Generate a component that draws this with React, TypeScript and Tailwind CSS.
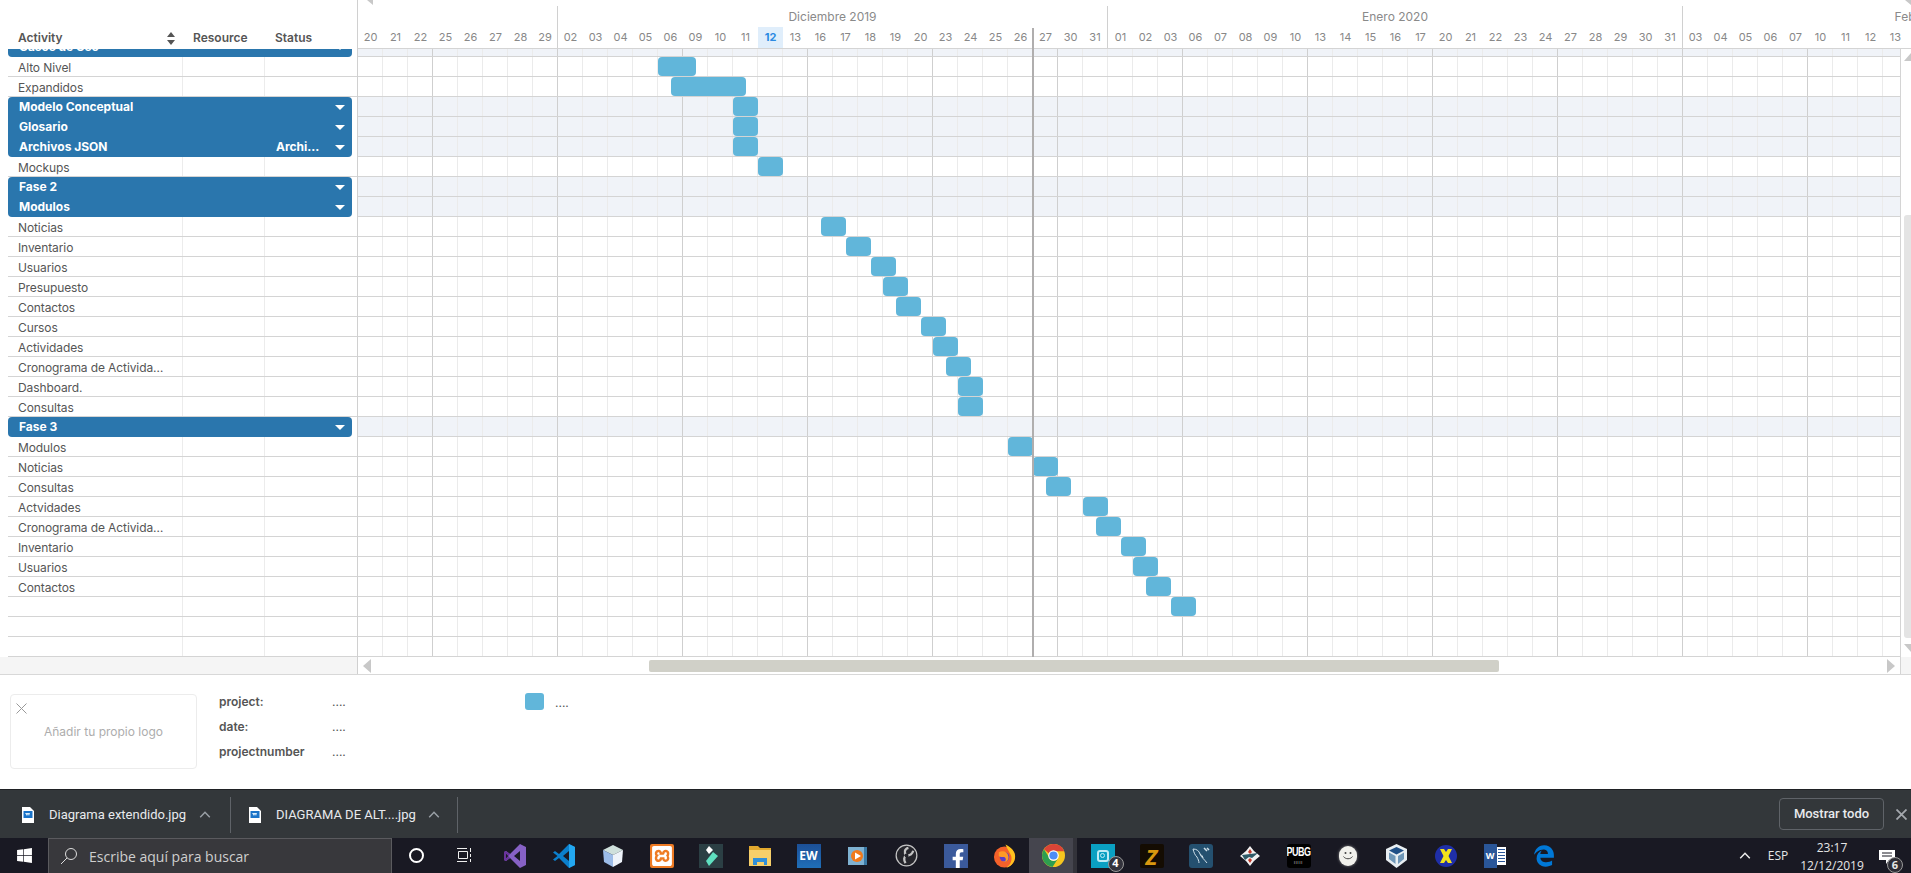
import type { ReactNode } from "react";
import { FaEdgeLegacy, FaFacebookF, FaWindows } from "react-icons/fa";
import { SiXampp } from "react-icons/si";

const dayLabels = "20 21 22 25 26 27 28 29 02 03 04 05 06 09 10 11 12 13 16 17 18 19 20 23 24 25 26 27 30 31 01 02 03 06 07 08 09 10 13 14 15 16 17 20 21 22 23 24 27 28 29 30 31 03 04 05 06 07 10 11 12 13".split(" ");
const monthEnds = [7, 29, 52];
const todayIndex = 16;
const columns = dayLabels.map((_, i) => i);

type Row = {
  name?: string;
  group?: boolean;
  top?: boolean;
  bottom?: boolean;
  status?: string;
  start?: number;
  span?: number;
};

const rows: Row[] = [
  { name: "Casos de Uso", group: true, bottom: true },
  { name: "Alto Nivel", start: 12, span: 1.5 },
  { name: "Expandidos", start: 12.5, span: 3 },
  { name: "Modelo Conceptual", group: true, top: true, start: 15, span: 1 },
  { name: "Glosario", group: true, start: 15, span: 1 },
  { name: "Archivos JSON", group: true, bottom: true, status: "Archivos", start: 15, span: 1 },
  { name: "Mockups", start: 16, span: 1 },
  { name: "Fase 2", group: true, top: true },
  { name: "Modulos", group: true, bottom: true },
  { name: "Noticias", start: 18.5, span: 1 },
  { name: "Inventario", start: 19.5, span: 1 },
  { name: "Usuarios", start: 20.5, span: 1 },
  { name: "Presupuesto", start: 21, span: 1 },
  { name: "Contactos", start: 21.5, span: 1 },
  { name: "Cursos", start: 22.5, span: 1 },
  { name: "Actividades", start: 23, span: 1 },
  { name: "Cronograma de Actividades", start: 23.5, span: 1 },
  { name: "Dashboard.", start: 24, span: 1 },
  { name: "Consultas", start: 24, span: 1 },
  { name: "Fase 3", group: true, top: true, bottom: true },
  { name: "Modulos", start: 26, span: 1 },
  { name: "Noticias", start: 27, span: 1 },
  { name: "Consultas", start: 27.5, span: 1 },
  { name: "Actvidades", start: 29, span: 1 },
  { name: "Cronograma de Actividades", start: 29.5, span: 1 },
  { name: "Inventario", start: 30.5, span: 1 },
  { name: "Usuarios", start: 31, span: 1 },
  { name: "Contactos", start: 31.5, span: 1 },
  { start: 32.5, span: 1 },
  {},
  {},
];

function Caret() {
  return <div className="w-0 h-0 border-l-[5px] border-r-[5px] border-t-[5px] border-l-transparent border-r-transparent border-t-white" />;
}

function LeftCells({ row }: { row: Row }) {
  if (row.group) {
    return (
      <div className="w-[358px] shrink-0 pl-2 pr-[5px] border-r border-[#d0d0d0]">
        <div
          className={`h-5 bg-[#2a76ad] flex items-center text-white font-bold ${row.top ? "rounded-t-[4px]" : ""} ${row.bottom ? "rounded-b-[4px]" : ""}`}
        >
          <span className="w-[268px] pl-[11px] leading-[22px]">{row.name}</span>
          <span className="w-[46px] truncate leading-[22px]">{row.status}</span>
          <span className="ml-[13px]">
            <Caret />
          </span>
        </div>
      </div>
    );
  }
  return (
    <div className="w-[358px] shrink-0 pl-2 border-r border-[#d0d0d0]">
      <div className="h-5 flex border-b border-[#d4d4d4] text-[#555]">
        <div className="w-[175px] pl-[10px] pr-[12px] border-r border-[#ececec] truncate leading-[21px] tracking-[-0.1px]">{row.name}</div>
        <div className="w-[82px] border-r border-[#ececec]" />
      </div>
    </div>
  );
}

function GanttRow({ row }: { row: Row }) {
  return (
    <div className="flex h-5 w-[1900px]">
      <LeftCells row={row} />
      <div className={`relative flex w-[1542px] border-b border-[#d4d4d4] overflow-hidden ${row.group ? "bg-[#f0f3f8]" : "bg-white"}`}>
        {columns.map((c) => (
          <div key={c} className={`w-[25px] shrink-0 border-r ${c % 5 === 2 ? "border-[#cfcfcf]" : "border-[#ebebeb]"}`} />
        ))}
        {row.start !== undefined && (
          <div
            className="absolute top-0 h-[19px] rounded-[4px] bg-[#61b6da]"
            style={{ left: row.start * 25, width: (row.span ?? 1) * 25 }}
          />
        )}
      </div>
    </div>
  );
}

function TimelineHeader() {
  return (
    <div className="w-[1553px] shrink-0 h-[49px] border-b border-[#d4d4d4] overflow-hidden">
      <div className="flex h-[27px] pt-[6px]">
        <div className="w-[200px] shrink-0 border-r border-[#d0d0d0]" />
        <div className="w-[550px] shrink-0 border-r border-[#d0d0d0] text-center text-[#8a8a8a] leading-[22px]">Diciembre 2019</div>
        <div className="w-[575px] shrink-0 border-r border-[#d0d0d0] text-center text-[#8a8a8a] leading-[22px]">Enero 2020</div>
        <div className="w-[500px] shrink-0 text-center text-[#8a8a8a] leading-[22px]">Febrero 2020</div>
      </div>
      <div className="flex h-[21px] w-[1600px]">
        {dayLabels.map((label, i) => (
          <div
            key={i}
            className={`w-[25px] shrink-0 flex items-center justify-center text-[11px] ${i === todayIndex ? "bg-[#e0eefb] text-[#2b8ae2] font-bold" : "text-[#888]"} ${monthEnds.includes(i) ? "border-r border-[#d0d0d0]" : ""}`}
          >
            {label}
          </div>
        ))}
      </div>
    </div>
  );
}

function Gantt() {
  return (
    <div className="relative font-['Inter',sans-serif] text-[12px]">
      <div className="flex h-[49px]">
        <div className="w-[358px] shrink-0 border-r border-[#d0d0d0] pt-[28px] pl-[18px] flex text-[#555] font-semibold leading-[20px]">
          <span className="w-[149px]">Activity</span>
          <svg width="8" height="13" viewBox="0 0 8 13" className="mt-[4px] fill-[#555]">
            <path d="M4 0 8 5H0ZM4 13 0 8H8Z" />
          </svg>
          <span className="ml-[18px] w-[82px]">Resource</span>
          <span>Status</span>
        </div>
        <TimelineHeader />
      </div>
      <div className="absolute left-[367px] top-0 w-0 h-0 border-t-[5px] border-l-[6px] border-t-[#c8c8c8] border-l-transparent" />
      <div className="absolute left-[1905px] top-0 w-0 h-0 border-t-[5px] border-l-[6px] border-t-[#c8c8c8] border-l-transparent" />
      <div className="flex h-[608px]">
        <div className="w-[1901px] h-[608px] overflow-hidden border-r border-[#d4d4d4]">
          <div className="-mt-[12px]">
            {rows.map((row, i) => (
              <GanttRow key={i} row={row} />
            ))}
          </div>
        </div>
        <div className="w-[10px] pt-[4px] flex flex-col items-end">
          <div className="w-0 h-0 border-b-[8px] border-l-[7px] border-b-[#c8c8c8] border-l-transparent" />
          <div className="w-[7px] h-[423px] mt-[154px] bg-[#e4e4e4] rounded-tl-[3px] rounded-bl-[3px]" />
          <div className="w-0 h-0 mt-[6px] border-t-[8px] border-l-[7px] border-t-[#c8c8c8] border-l-transparent" />
        </div>
      </div>
      <div className="flex h-[18px] border-b border-[#d8d8d8]">
        <div className="w-[358px] shrink-0 bg-[#f5f5f5] border-r border-[#d0d0d0]" />
        <div className="w-[1543px] flex items-center border-r border-[#d4d4d4]">
          <div className="ml-[5px] w-0 h-0 border-y-[7px] border-r-[8px] border-y-transparent border-r-[#c8c8c8]" />
          <div className="ml-[278px] w-[850px] h-3 bg-[#d0d0c8] rounded-[2px]" />
          <div className="ml-[388px] w-0 h-0 border-y-[7px] border-l-[8px] border-y-transparent border-l-[#c8c8c8]" />
        </div>
        <div className="flex-1 bg-[#f5f5f5]" />
      </div>
    </div>
  );
}

function Legend() {
  return (
    <div className="h-[114px] pt-[14px] pl-[10px] flex items-start bg-white font-['Inter',sans-serif] text-[12px]">
      <div className="relative w-[187px] h-[75px] mt-[5px] pt-px border border-[#ececec] rounded-[4px] flex items-center justify-center text-[#adadad]">
        <svg width="11" height="11" viewBox="0 0 11 11" className="absolute left-[5px] top-[8px] stroke-[#999]">
          <path d="M.5.5l10 10M10.5.5l-10 10" fill="none" />
        </svg>
        Añadir tu propio logo
      </div>
      <div className="ml-[22px] w-[306px] text-[#555]">
        {["project:", "date:", "projectnumber"].map((label) => (
          <div key={label} className="flex h-[25px] items-center">
            <span className="w-[113px] font-semibold">{label}</span>
            <span>....</span>
          </div>
        ))}
      </div>
      <div className="w-[19px] h-[17px] mt-[4px] rounded-[3px] bg-[#61b6da]" />
      <span className="ml-[11px] mt-[4px] text-[#555] leading-[20px]">....</span>
    </div>
  );
}

function FileIcon() {
  return (
    <svg width="12" height="16" viewBox="0 0 12 16" className="shrink-0">
      <path d="M0 0h8l4 4v12H0Z" fill="#fff" />
      <rect x="1.5" y="4" width="9" height="7" fill="#1a73c8" />
      <path d="M3 6h5l-1 3-1-2-1 2Z" fill="#d8ecfa" />
    </svg>
  );
}

function Chevron({ color = "#9aa0a6", size = 12 }: { color?: string; size?: number }) {
  return (
    <svg width={size} height={size * 0.6} viewBox="0 0 10 6" fill="none" stroke={color} strokeWidth="1.2">
      <path d="M1 5.2 5 1l4 4.2" />
    </svg>
  );
}

function DownloadBar() {
  return (
    <div className="h-[49px] flex bg-[#33373a] border-t border-[#1f2124] font-['Roboto',sans-serif] text-[13px] text-[#e8eaed]">
      <div className="w-[231px] h-9 mt-[7px] flex items-center pl-[22px] border-r border-[#5f6368]">
        <FileIcon />
        <span className="ml-[15px] w-[150px]">Diagrama extendido.jpg</span>
        <Chevron />
      </div>
      <div className="w-[227px] h-9 mt-[7px] flex items-center pl-[18px] border-r border-[#5f6368]">
        <FileIcon />
        <span className="ml-[15px] w-[152px]">DIAGRAMA DE ALT....jpg</span>
        <Chevron />
      </div>
      <div className="ml-auto h-8 mt-2 w-[105px] flex items-center justify-center border border-[#5f6368] rounded-[4px] font-medium">Mostrar todo</div>
      <div className="ml-[8px] w-[19px] flex items-center justify-center">
        <svg width="11" height="11" viewBox="0 0 11 11" stroke="#a4a8ad" strokeWidth="1.8">
          <path d="M.5.5l10 10M10.5.5l-10 10" />
        </svg>
      </div>
    </div>
  );
}

function Square({ className, children }: { className: string; children?: ReactNode }) {
  return <div className={`w-6 h-6 flex items-center justify-center ${className}`}>{children}</div>;
}

const appIcons: { name: string; node: ReactNode }[] = [
  {
    name: "visual studio",
    node: (
      <svg width="24" height="24" viewBox="0 0 24 24">
        <path d="M17 0l6 3v18l-6 3L7 14l-4 3-2-1V8l2-1 4 3Z" fill="#8661c5" />
        <path d="M3 9.500v5L5.500 12ZM17 7l-6 5 6 5Z" fill="#1a1a24" />
        <path d="M1 8l2-1 4 3-1.500 2L3 9.500v5L5.500 12 7 14l-4 3-2-1Z" fill="#68339a" />
      </svg>
    ),
  },
  {
    name: "vscode",
    node: (
      <svg width="24" height="24" viewBox="0 0 24 24">
        <path d="M17 0l6 3v18l-6 3L7 14l-4 3-2-1.500L5.500 12 1 8.500 3 7l4 3Z" fill="#0b7fcc" />
        <path d="M17 0l6 3v18l-6 3Z" fill="#23a7f0" />
        <path d="M17 7l-6 5 6 5Z" fill="#1a1a24" />
      </svg>
    ),
  },
  {
    name: "box",
    node: (
      <svg width="22" height="24" viewBox="0 0 22 24">
        <path d="M11 1 21 6 11 11 1 6Z" fill="#cfe0dc" />
        <path d="M1 6l10 5v12L2 18Z" fill="#9cbce8" />
        <path d="M21 6 11 11v12l9-5Z" fill="#eef3fa" />
      </svg>
    ),
  },
  {
    name: "xampp",
    node: (
      <Square className="bg-[#ee7b24] rounded-[2px]">
        <SiXampp className="text-white" size={20} />
      </Square>
    ),
  },
  {
    name: "filmora",
    node: (
      <Square className="bg-[#2b3f44]">
        <svg width="16" height="20" viewBox="0 0 16 20">
          <path d="M6 0l4 4-4 4-3-4Z" fill="#fff" />
          <path d="M10 6l5 4-9 10-3-5Z" fill="#5fe0c0" />
        </svg>
      </Square>
    ),
  },
  {
    name: "folder",
    node: (
      <svg width="22" height="20" viewBox="0 0 22 20">
        <path d="M0 0h9l2 2h11v18H0Z" fill="#e2a92e" />
        <path d="M0 4h22v16H0Z" fill="#f6cf6a" />
        <path d="M4 19v-7h14v7h-3v-3H8v3Z" fill="#2f8fd8" />
      </svg>
    ),
  },
  {
    name: "expression web",
    node: (
      <Square className="bg-gradient-to-b from-[#1c4f96] to-[#1f6fb8]">
        <span className="text-white font-bold text-[12px] font-['Open_Sans',sans-serif]">EW</span>
      </Square>
    ),
  },
  {
    name: "player",
    node: (
      <svg width="20" height="20" viewBox="0 0 20 20">
        <path d="M0 1l19 0v18H0Z" fill="#7fb2d2" />
        <path d="M16 1h3v18h-3Z" fill="#3c7ba6" />
        <circle cx="9" cy="10" r="6" fill="#f07a1c" />
        <path d="M7 6.500 13 10l-6 3.500Z" fill="#fff" />
      </svg>
    ),
  },
  {
    name: "obs",
    node: (
      <svg width="23" height="23" viewBox="0 0 24 24" fill="none" stroke="#c4c4c4">
        <circle cx="12" cy="12" r="10.800" fill="#25252b" strokeWidth="1.300" />
        <path d="M12 12C9 9 10 5 14 4M12 12c-3 1-3 5-1 8M12 12c3 0 6-1 7-5" strokeWidth="2.400" />
        <circle cx="12" cy="12" r="2" fill="#25252b" stroke="none" />
      </svg>
    ),
  },
  {
    name: "facebook",
    node: (
      <Square className="bg-[#3b5a9b] items-end overflow-hidden">
        <FaFacebookF className="text-white -mb-[1px] ml-[4px]" size={20} />
      </Square>
    ),
  },
  {
    name: "firefox",
    node: (
      <svg width="23" height="24" viewBox="0 0 24 24">
        <circle cx="12" cy="13" r="11" fill="#f4612a" />
        <path d="M13 0c7 3 11 9 10 14-1 6-5 9-9 10 5-3 6-8 5-12-1-3-4-7-6-12Z" fill="#ffc21f" />
        <circle cx="12" cy="13" r="5" fill="#5a3ec8" />
        <path d="M6 8c4-2 9-1 10 4 1 4-2 7-6 6 3 0 4-2 3-4-1-2-6 0-7-2Z" fill="#ff9a26" />
      </svg>
    ),
  },
  {
    name: "chrome",
    node: (
      <svg width="23" height="23" viewBox="0 0 24 24">
        <circle cx="12" cy="12" r="12" fill="#f6c61f" />
        <path d="M2 5.500A12 12 0 0 1 23.200 7.500H12A5 5 0 0 0 7.500 10Z" fill="#db4437" />
        <path d="M2 5.500A12 12 0 0 0 11 24l5.500-8.500A5 5 0 0 1 7.500 14Z" fill="#2e9e4f" />
        <circle cx="12" cy="12" r="5.500" fill="#fff" />
        <circle cx="12" cy="12" r="4.300" fill="#4d8cf5" />
      </svg>
    ),
  },
  {
    name: "ring",
    node: (
      <div className="relative">
        <Square className="bg-[#0aa0c2]">
          <div className="w-[12px] h-[12px] rounded-[3px] border-2 border-[#bdebf5] flex items-center justify-center">
            <div className="w-[5px] h-[5px] rounded-full border border-[#bdebf5]" />
          </div>
        </Square>
        <div className="absolute -right-[9px] -bottom-[4px] w-4 h-4 rounded-full bg-[#33333c] border border-[#999] text-white text-[11px] font-bold flex items-center justify-center">4</div>
      </div>
    ),
  },
  {
    name: "z",
    node: (
      <Square className="bg-[#140c02] rounded-[2px]">
        <span className="text-[#d9980f] font-bold italic text-[22px] leading-none font-['Open_Sans',sans-serif]">Z</span>
      </Square>
    ),
  },
  {
    name: "mysql",
    node: (
      <Square className="bg-[#24506f] rounded-[3px]">
        <svg width="20" height="20" viewBox="0 0 20 20" fill="none" stroke="#cfe0ea">
          <path d="M2 3c4 0 6 2 7 5 1 3 4 5 7 9M2 3c1 4 2 6 4 8M6 11c1 2 2 4 2 6M9 8c2 1 3 3 3 4" />
          <path d="M13 2l3 3M16 2l2 2" strokeWidth="1.500" />
        </svg>
      </Square>
    ),
  },
  {
    name: "sharp",
    node: (
      <svg width="22" height="22" viewBox="0 0 22 22">
        <path d="M11 1l4 5 6 5-6 5-4 5-4-5-6-5 6-5Z" fill="#f2f2f2" />
        <path d="M11 4l2 3-2 2-2-2ZM11 18l-2-3 2-2 2 2Z" fill="#c0392b" />
        <path d="M3 10l16-2-6 5-3-1-4 3Z" fill="#2f5b68" />
      </svg>
    ),
  },
  {
    name: "pubg",
    node: (
      <div className="w-6 h-6 bg-black rounded-[3px] flex flex-col items-center justify-center font-['Liberation_Sans',sans-serif] text-white overflow-hidden">
        <span className="text-[9px] font-bold leading-[11px] tracking-[-0.5px] scale-y-150">PUBG</span>
        <span className="text-[3px] mt-[4px] leading-[3px] tracking-[1px]">IIIII</span>
      </div>
    ),
  },
  {
    name: "smiley",
    node: (
      <div className="w-[18px] h-[20px] rounded-full bg-[#f1f1ec] shadow-[0_0_3px_#888] flex flex-col items-center pt-[6px]">
        <svg width="12" height="9" viewBox="0 0 12 9" fill="none" stroke="#444">
          <circle cx="3.500" cy="1" r="1" fill="#444" stroke="none" />
          <circle cx="8.500" cy="1" r="1" fill="#444" stroke="none" />
          <path d="M1.500 4.500c2 3 7 3 9 0" />
        </svg>
      </div>
    ),
  },
  {
    name: "virtualbox",
    node: (
      <svg width="21" height="24" viewBox="0 0 21 24">
        <path d="M10.500 0 21 5v11l-10.500 8L0 16V5Z" fill="#e8eef2" />
        <path d="M10.500 3 18 6.500l-7.500 4L3 6.500Z" fill="#1f4f86" />
        <path d="M3 8.500l6.500 3.500v8L3 15ZM18 8.500 12 12v8l6-5Z" fill="#6f97b8" />
      </svg>
    ),
  },
  {
    name: "x",
    node: (
      <svg width="22" height="22" viewBox="0 0 22 22">
        <circle cx="11" cy="11" r="11" fill="#1f2fa8" />
        <path d="M5 4h4l2 3 2-3h4l-3.500 7L17 18h-4l-2-3-2 3H5l3.500-7Z" fill="#f2e21b" />
      </svg>
    ),
  },
  {
    name: "word",
    node: (
      <div className="w-[22px] h-[24px] flex items-center">
        <div className="w-[13px] h-[24px] bg-[#2a5699] flex items-center justify-center text-white text-[9px] font-bold font-['Open_Sans',sans-serif]">W</div>
        <div className="w-[9px] h-[18px] bg-white flex flex-col justify-around py-[1px] px-[1px]">
          {[0, 1, 2, 3, 4].map((i) => (
            <div key={i} className="h-px bg-[#2a5699]" />
          ))}
        </div>
      </div>
    ),
  },
  {
    name: "edge",
    node: <FaEdgeLegacy className="text-[#0078d7]" size={22} />,
  },
];

function Taskbar() {
  return (
    <div className="h-[35px] flex bg-[#191923] overflow-hidden font-['Open_Sans',sans-serif] text-white">
      <div className="w-[48px] flex items-center justify-center">
        <FaWindows size={17} />
      </div>
      <div className="w-[344px] flex items-center bg-[#38383c] border-t border-x border-[#5a5a5e] text-[#cfcfcf] text-[14px]">
        <svg width="18" height="18" viewBox="0 0 18 18" fill="none" stroke="#ddd" className="ml-[11px]">
          <circle cx="11" cy="7" r="5.500" />
          <path d="M7 11 1 17" />
        </svg>
        <span className="ml-[11px]">Escribe aquí para buscar</span>
      </div>
      <div className="w-[49px] flex items-center justify-center">
        <div className="w-[15px] h-[15px] rounded-full border-2 border-white" />
      </div>
      <div className="w-[49px] flex items-center justify-center -ml-[2px] mr-[2px]">
        <svg width="16" height="15" viewBox="0 0 16 15" fill="none" stroke="#eee">
          <path d="M1 .5h10M2.500 3.500h9v7h-9ZM1 13.500h10M14.500 0v4M14.500 6v3M14.500 11v3" />
        </svg>
      </div>
      {appIcons.map((icon) => (
        <div key={icon.name} className="relative w-[49px] shrink-0 flex items-center justify-center">
          {icon.name === "chrome" && (
            <>
              <div className="absolute left-0 top-0 w-[44px] h-full bg-[#45454e]" />
              <div className="absolute left-[44px] top-0 w-[4px] h-full bg-[#33333a]" />
            </>
          )}
          <div className="relative">{icon.node}</div>
        </div>
      ))}
      <div className="ml-auto flex items-center text-[12px] text-[#e6e6e6]">
        <div className="w-[24px] flex justify-center">
          <Chevron color="#eee" size={12} />
        </div>
        <div className="w-[42px] text-center">ESP</div>
        <div className="w-[66px] text-center leading-[18px] pt-[3px]">
          <div>23:17</div>
          <div>12/12/2019</div>
        </div>
        <div className="relative w-[46px] h-[35px]">
          <svg width="16" height="14" viewBox="0 0 16 14" className="absolute left-[14px] top-[12px]">
            <path d="M0 0h16v10h-6l-3 4v-4H0Z" fill="#fff" />
            <path d="M3 3h10M3 6h10" stroke="#191923" />
          </svg>
          <div className="absolute left-[22px] top-[19px] w-4 h-4 rounded-full bg-[#2c2c34] border border-[#999] text-[11px] font-bold flex items-center justify-center">6</div>
        </div>
      </div>
    </div>
  );
}

export default function App() {
  return (
    <div className="w-[1911px] h-[873px] overflow-hidden bg-white relative">
      <Gantt />
      <div className="absolute left-[1032px] top-[28px] w-[2px] h-[629px] bg-[#b0aeae]" />
      <Legend />
      <DownloadBar />
      <Taskbar />
    </div>
  );
}
